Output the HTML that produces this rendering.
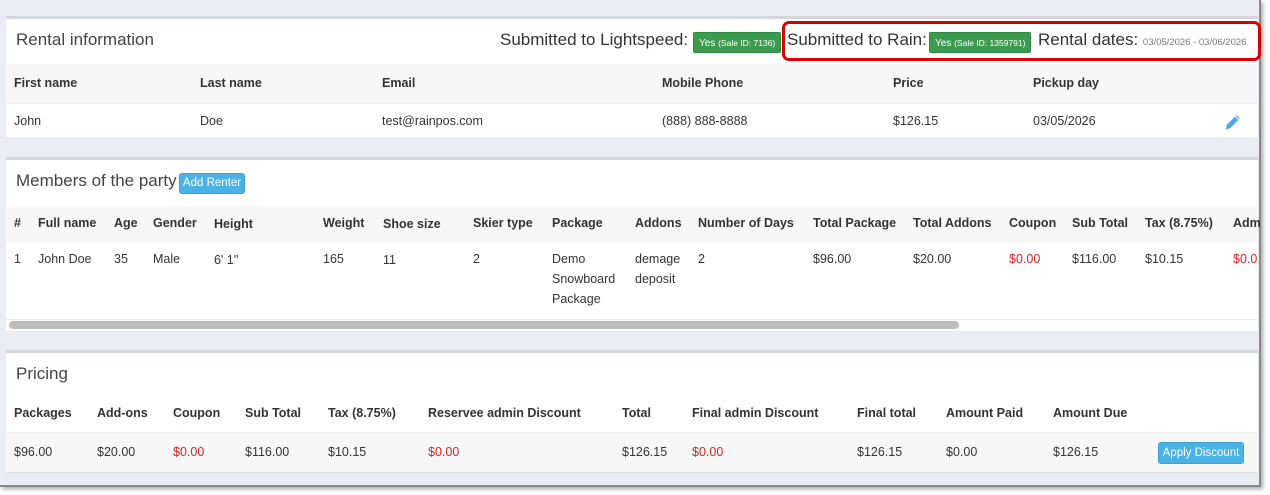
<!DOCTYPE html>
<html><head><style>
*{margin:0;padding:0;box-sizing:border-box}
body{width:1270px;height:495px;background:#fff;position:relative;overflow:hidden;font-family:"Liberation Sans",sans-serif;color:#333;font-size:12.5px}
.frame{position:absolute;left:0;top:0;width:1261px;height:487px;background:#e9ecf3;border-right:2px solid #888;border-bottom:2px solid #888;box-shadow:2px 2px 4px rgba(0,0,0,.35)}
.p{position:absolute;left:6px;width:1252px;background:#fff;border-top:3px solid #d2d6de}
.t{position:absolute;white-space:nowrap}
.h{font-weight:bold;font-size:12.5px}
.title{font-size:17px;color:#444}
.row{position:absolute;left:0;width:1252px}
.g{background:#f7f7f7}
.red{color:#dd2222}
.badge{position:absolute;background:#3d9b4f;color:#fff;font-size:10px;border-radius:2px;height:21px;line-height:20px;padding:0 5px;border:1px solid #2f8a41}
.btn{position:absolute;background:#4ab3e6;color:#fff;border:1px solid #3aa3d6;border-radius:3px;font-size:11.5px;text-align:center}
</style></head><body>
<div class="frame">
<div class="p" style="top:16px;height:121px">
  <div class="t title" style="left:10px;top:11px">Rental information</div>
  <div class="t title" style="left:494px;top:11px;color:#333">Submitted to Lightspeed:</div>
  <div class="badge" style="left:687px;top:13px">Yes <span style="font-size:8.5px">(Sale ID: 7136)</span></div>
  <div class="t title" style="left:781px;top:11px;color:#333">Submitted to Rain:</div>
  <div class="badge" style="left:923px;top:13px">Yes <span style="font-size:8.5px">(Sale ID: 1359791)</span></div>
  <div class="t title" style="left:1032px;top:11px;color:#333">Rental dates: <span style="font-size:9.5px;color:#777">03/05/2026 - 03/06/2026</span></div>
  <div class="row g" style="top:45px;height:39px">
    <div class="t h" style="left:8px;top:12px">First name</div>
    <div class="t h" style="left:194px;top:12px">Last name</div>
    <div class="t h" style="left:376px;top:12px">Email</div>
    <div class="t h" style="left:656px;top:12px">Mobile Phone</div>
    <div class="t h" style="left:887px;top:12px">Price</div>
    <div class="t h" style="left:1027px;top:12px">Pickup day</div>
  </div>
  <div class="row" style="top:84px;height:36px;border-top:1px solid #eee">
    <div class="t" style="left:8px;top:10px">John</div>
    <div class="t" style="left:194px;top:10px">Doe</div>
    <div class="t" style="left:376px;top:10px">test@rainpos.com</div>
    <div class="t" style="left:656px;top:10px">(888) 888-8888</div>
    <div class="t" style="left:887px;top:10px">$126.15</div>
    <div class="t" style="left:1027px;top:10px">03/05/2026</div>
    <svg class="t" style="left:1218px;top:9px" width="18" height="18" viewBox="0 0 16 16"><path d="M1.5 14.5l1-4 8.5-8.5 3 3-8.5 8.5z" fill="#4aa8e0"/><path d="M10 3l3 3" stroke="#fff" stroke-width="0.8"/></svg>
  </div>
</div>

<div class="p" style="top:157px;height:174px">
  <div class="t title" style="left:10px;top:11px">Members of the party</div>
  <div class="btn" style="left:173px;top:13px;width:66px;height:21px;line-height:19px">Add Renter</div>
  <div class="row g" style="top:46px;height:37px">
    <div class="t h" style="left:8px;top:10px">#</div>
    <div class="t h" style="left:32px;top:10px">Full name</div>
    <div class="t h" style="left:108px;top:10px">Age</div>
    <div class="t h" style="left:147px;top:10px">Gender</div>
    <div class="t h" style="left:208px;top:11px">Height</div>
    <div class="t h" style="left:317px;top:10px">Weight</div>
    <div class="t h" style="left:377px;top:11px">Shoe size</div>
    <div class="t h" style="left:467px;top:10px">Skier type</div>
    <div class="t h" style="left:546px;top:10px">Package</div>
    <div class="t h" style="left:629px;top:10px">Addons</div>
    <div class="t h" style="left:692px;top:10px">Number of Days</div>
    <div class="t h" style="left:807px;top:10px">Total Package</div>
    <div class="t h" style="left:907px;top:10px">Total Addons</div>
    <div class="t h" style="left:1003px;top:10px">Coupon</div>
    <div class="t h" style="left:1066px;top:10px">Sub Total</div>
    <div class="t h" style="left:1139px;top:10px">Tax (8.75%)</div>
    <div class="t h" style="left:1227px;top:10px">Adm</div>
  </div>
  <div class="row" style="top:83px;height:77px;border-bottom:1px solid #e5e5e5">
    <div class="t" style="left:8px;top:9px">1</div>
    <div class="t" style="left:32px;top:9px">John Doe</div>
    <div class="t" style="left:108px;top:9px">35</div>
    <div class="t" style="left:147px;top:9px">Male</div>
    <div class="t" style="left:208px;top:10px">6' 1''</div>
    <div class="t" style="left:317px;top:9px">165</div>
    <div class="t" style="left:377px;top:10px">11</div>
    <div class="t" style="left:467px;top:9px">2</div>
    <div class="t" style="left:546px;top:6px;line-height:20px">Demo<br>Snowboard<br>Package</div>
    <div class="t" style="left:629px;top:6px;line-height:20px">demage<br>deposit</div>
    <div class="t" style="left:692px;top:9px">2</div>
    <div class="t" style="left:807px;top:9px">$96.00</div>
    <div class="t" style="left:907px;top:9px">$20.00</div>
    <div class="t red" style="left:1003px;top:9px">$0.00</div>
    <div class="t" style="left:1066px;top:9px">$116.00</div>
    <div class="t" style="left:1139px;top:9px">$10.15</div>
    <div class="t red" style="left:1227px;top:9px">$0.0</div>
  </div>
  <div class="t" style="left:3px;top:161px;width:950px;height:8px;background:#bdbdbd;border-radius:4px"></div>
</div>

<div class="p" style="top:350px;height:122px">
  <div class="t title" style="left:10px;top:11px">Pricing</div>
  <div class="row" style="top:44px;height:37px">
    <div class="t h" style="left:8px;top:9px">Packages</div>
    <div class="t h" style="left:91px;top:9px">Add-ons</div>
    <div class="t h" style="left:167px;top:9px">Coupon</div>
    <div class="t h" style="left:239px;top:9px">Sub Total</div>
    <div class="t h" style="left:322px;top:9px">Tax (8.75%)</div>
    <div class="t h" style="left:422px;top:9px">Reservee admin Discount</div>
    <div class="t h" style="left:616px;top:9px">Total</div>
    <div class="t h" style="left:686px;top:9px">Final admin Discount</div>
    <div class="t h" style="left:851px;top:9px">Final total</div>
    <div class="t h" style="left:940px;top:9px">Amount Paid</div>
    <div class="t h" style="left:1047px;top:9px">Amount Due</div>
  </div>
  <div class="row g" style="top:79px;height:41px;border-top:1px solid #eee;border-bottom:1px solid #ddd">
    <div class="t" style="left:8px;top:12px">$96.00</div>
    <div class="t" style="left:91px;top:12px">$20.00</div>
    <div class="t red" style="left:167px;top:12px">$0.00</div>
    <div class="t" style="left:239px;top:12px">$116.00</div>
    <div class="t" style="left:322px;top:12px">$10.15</div>
    <div class="t red" style="left:422px;top:12px">$0.00</div>
    <div class="t" style="left:616px;top:12px">$126.15</div>
    <div class="t red" style="left:686px;top:12px">$0.00</div>
    <div class="t" style="left:851px;top:12px">$126.15</div>
    <div class="t" style="left:940px;top:12px">$0.00</div>
    <div class="t" style="left:1047px;top:12px">$126.15</div>
    <div class="btn" style="left:1152px;top:9px;width:86px;height:22px;line-height:20px">Apply Discount</div>
  </div>
</div>
</div>
<div style="position:absolute;left:782px;top:21px;width:479px;height:40px;border:3px solid #d90000;border-radius:7px"></div>
</body></html>
